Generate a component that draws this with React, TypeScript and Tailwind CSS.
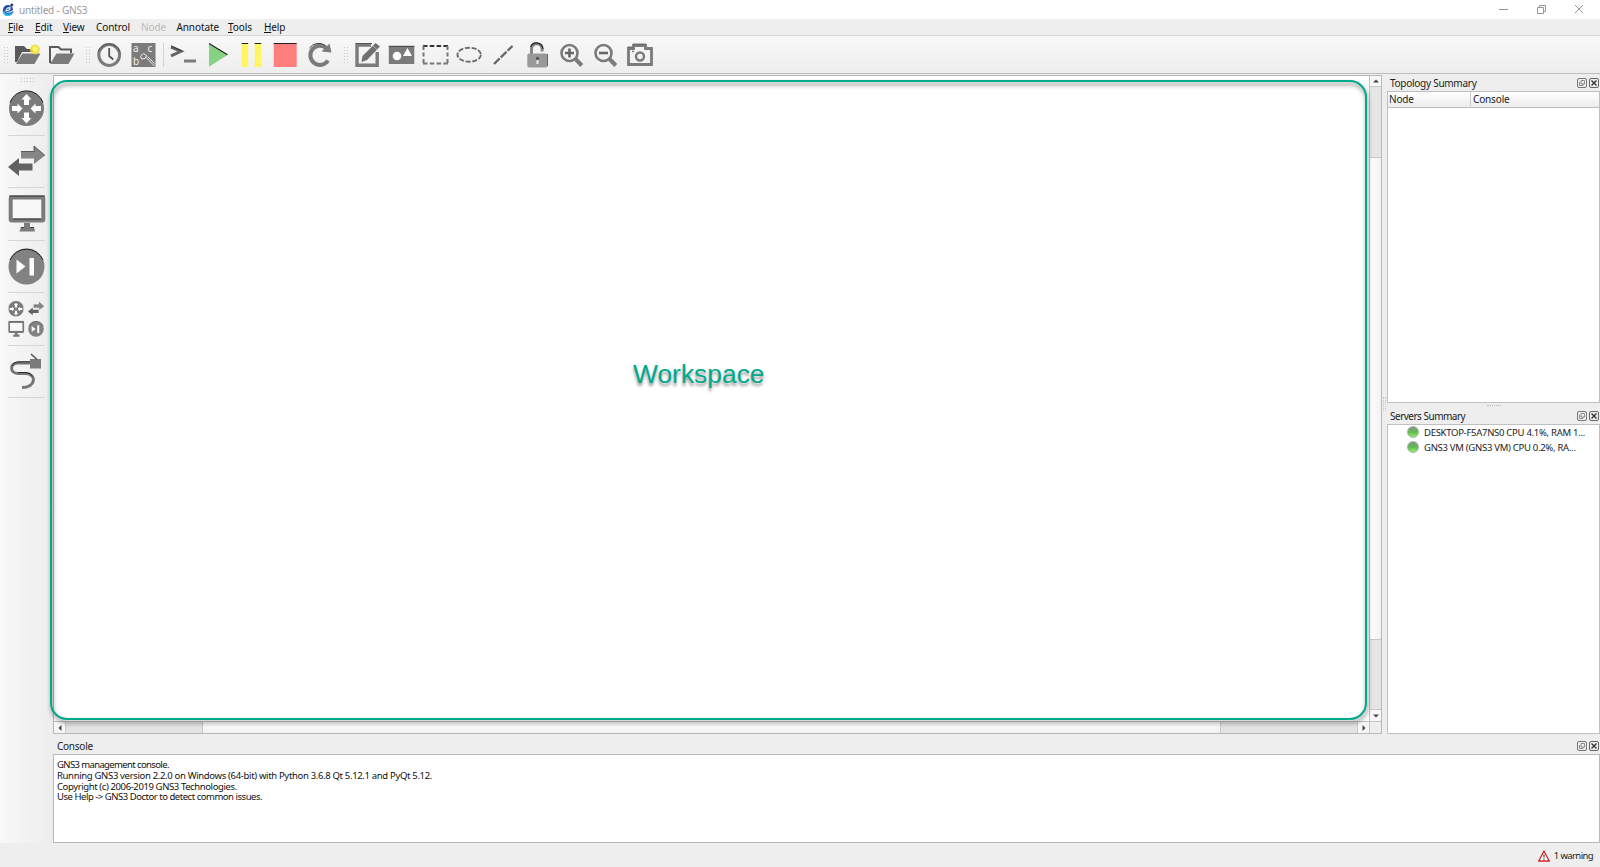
import React from "react";

const G = "#7b7b7b";
const D = "#5c5c5c";

function GripV() {
  return (
    <svg width="5" height="18" viewBox="0 0 5 18" className="shrink-0">
      {[0, 3, 6, 9, 12, 15].map((y) => (
        <g key={y} fill="#c9c9c9">
          <rect x="0" y={y + 1} width="1" height="1" />
          <rect x="3" y={y + 1} width="1" height="1" />
        </g>
      ))}
    </svg>
  );
}

function GripH() {
  return (
    <svg width="15" height="5" viewBox="0 0 15 5" className="block shrink-0">
      {[0, 3, 6, 9, 12].map((x) => (
        <g key={x} fill="#bdbdbd">
          <rect x={x + 1} y="0" width="1" height="1" />
          <rect x={x + 1} y="3" width="1" height="1" />
        </g>
      ))}
    </svg>
  );
}

function Tool({ children }: { children: React.ReactNode }) {
  return (
    <svg width="34" height="37" viewBox="0 0 34 37" className="block shrink-0" fill="none">
      {children}
    </svg>
  );
}

function FolderNew() {
  return (
    <Tool>
      <path d="M5 10h9l3 3h10v3H12l-5 10H5z" fill="#5a5a5a" />
      <path d="M12.5 17.5H30.5L24.5 28H6z" fill={G} />
      <circle cx="25" cy="13.5" r="5" fill="#efe23c" opacity=".85" />
      <circle cx="25" cy="13.5" r="2.5" fill="#fff76a" />
    </Tool>
  );
}
function FolderOpen() {
  return (
    <Tool>
      <path d="M6 27V11h8.500l2.500 2.500h10V17" stroke={D} strokeWidth="2" />
      <path d="M12.500 17.500H30.500L24.500 28H6z" fill={G} />
    </Tool>
  );
}
function Clock() {
  return (
    <Tool>
      <circle cx="17.200" cy="19" r="10.400" stroke={G} strokeWidth="3" />
      <path d="M6 16a11.500 11.500 0 0 1 22 0" stroke="#444" strokeWidth=".8" />
      <path d="M17.200 12v8l4 3.500" stroke="#555" strokeWidth="1.800" />
    </Tool>
  );
}
function Labels() {
  return (
    <Tool>
      <rect x="5.500" y="7" width="24" height="24" fill={G} />
      <g fill="#f2f2f2" fontFamily="Noto Sans, sans-serif" fontSize="10">
        <text x="7" y="15.500">a</text>
        <text x="21.500" y="15.500">c</text>
        <text x="7" y="29">b</text>
      </g>
      <path d="M14.500 20l3-2.500 3 2-1.500 3-3.500.5zM19.500 21l9 9M21.500 20.500l7 7" stroke="#eee" strokeWidth="1" />
    </Tool>
  );
}
function Prompt() {
  return (
    <Tool>
      <path d="M5 11l10 4.300L5 19.800" stroke="#666" strokeWidth="3" />
      <path d="M5 10l10.500 4.800" stroke="#333" strokeWidth="1" />
      <path d="M18 25h12" stroke={G} strokeWidth="3" />
    </Tool>
  );
}
function Play() {
  return (
    <Tool>
      <path d="M9 7.500L27.500 19L9 30.800z" fill="#86d283" />
      <path d="M9 7.500L27.500 18.700" stroke="#222" strokeWidth="1.200" />
    </Tool>
  );
}
function Pause() {
  return (
    <Tool>
      <path d="M7.700 7h6.500v24H7.700zM20.700 7H27.200v24h-6.500z" fill="#fff660" />
      <path d="M7.700 7.500H14.200M20.700 7.500H27.200" stroke="#222" />
    </Tool>
  );
}
function Stop() {
  return (
    <Tool>
      <path d="M5.700 7h23v24h-23z" fill="#ff7f7f" />
      <path d="M5.700 7.500h23" stroke="#222" />
    </Tool>
  );
}
function Reload() {
  return (
    <Tool>
      <path d="M26 24.500A9.600 9.600 0 1 1 24.200 12" stroke={G} strokeWidth="4" />
      <path d="M27.500 7.500l2 9-10-1z" fill={G} />
      <path d="M7.500 12a11.500 11.500 0 0 1 16-2.500" stroke="#444" />
    </Tool>
  );
}
function Edit() {
  return (
    <Tool>
      <path d="M27.200 16v13.200H7V9h14" stroke={G} strokeWidth="3.400" />
      <path d="M5.500 7.500H22" stroke="#555" />
      <path d="M25.500 7l4.500 3.500L17 24l-5.500 2 1-6z" fill="#707070" />
      <path d="M22.500 9.500l4.500 4" stroke="#ccc" strokeWidth=".7" />
    </Tool>
  );
}
function Picture() {
  return (
    <Tool>
      <rect x="4.800" y="10" width="25.500" height="18" fill={G} />
      <path d="M4.800 10.300h25.500" stroke="#444" />
      <circle cx="13" cy="20" r="4.300" fill="#fff" />
      <path d="M19 20l4.500-8 4.500 8z" fill="#fff" />
    </Tool>
  );
}
function DashedRect() {
  return (
    <Tool>
      <path d="M5 10h25" stroke="#333" strokeWidth="2" strokeDasharray="4.500 2.300" />
      <path d="M5 27.500h25" stroke="#777" strokeWidth="2" strokeDasharray="4.500 2.300" />
      <path d="M5.500 10v18M29.500 10v18" stroke="#777" strokeWidth="2" strokeDasharray="4 2.500" />
    </Tool>
  );
}
function DashedEllipse() {
  return (
    <Tool>
      <ellipse cx="17.200" cy="18.700" rx="11.700" ry="7" stroke="#6a6a6a" strokeWidth="1.900" strokeDasharray="5 1.700" />
    </Tool>
  );
}
function DashedLine() {
  return (
    <Tool>
      <path d="M8 28L26.500 10" stroke="#666" strokeWidth="2.300" strokeDasharray="8 1.500" />
    </Tool>
  );
}
function Unlock() {
  return (
    <Tool>
      <path d="M11.500 20v-7a5.300 5.300 0 0 1 10.600 0v2.500" stroke="#858585" strokeWidth="3" />
      <path d="M10.500 11a6.500 6.500 0 0 1 12.500 2" stroke="#222" strokeWidth="1.200" />
      <rect x="7.300" y="17.500" width="20.400" height="14" rx="2" fill="#999" />
      <path d="M27.500 18v12" stroke="#666" />
      <path d="M17.500 22v6" stroke="#eee" strokeWidth="2" />
      <circle cx="17.500" cy="22.500" r="1.700" fill="#555" />
    </Tool>
  );
}
function Zoom({ plus }: { plus?: boolean }) {
  return (
    <Tool>
      <circle cx="15.500" cy="17" r="8" stroke={G} strokeWidth="2.600" />
      <path d="M21.500 23l6.300 6.500" stroke={G} strokeWidth="4" />
      <path d={plus ? "M11 17h9M15.500 12.500v9" : "M11 17h9"} stroke="#666" strokeWidth="2.600" />
    </Tool>
  );
}
function Camera() {
  return (
    <Tool>
      <path d="M6.500 12.500h5V9.500h12v3H29.500v16H6.500z" stroke={G} strokeWidth="2.800" />
      <circle cx="18" cy="20.500" r="4" stroke={G} strokeWidth="2.400" />
      <path d="M10 15.500h2" stroke={G} strokeWidth="1.500" />
      <path d="M5.500 11h5M11 8h13" stroke="#555" strokeWidth=".8" />
    </Tool>
  );
}

function RouterShape() {
  return (
    <g>
      <circle cx="18.500" cy="18.500" r="17.500" fill={G} />
      <path d="M2 12.500a17.500 17.500 0 0 1 33 0" stroke="#222" fill="none" />
      <g fill="#fff">
        <path d="M18.500 4l5 5.500H21V15h-5V9.500h-2.500z" />
        <path d="M18.500 33.500l5-5.500H21v-5.500h-5V28h-2.500z" />
        <path d="M14.500 18.500l-5-5V16H4v5h5.500v2.500z" />
        <path d="M22.500 18.500l5-5V16H33v5h-5.500v2.500z" />
      </g>
    </g>
  );
}
function SwitchShape() {
  return (
    <g>
      <path d="M13 8.500h13V3l11 9.500L26 21v-5.500H13z" fill="#858585" />
      <path d="M13 8.500h13V3l11 9.500" stroke="#444" strokeWidth=".8" fill="none" />
      <path d="M24.500 20.500H11V15L0 24l11 9v-5.500h13.500z" fill="#626262" />
    </g>
  );
}
function MonitorShape() {
  return (
    <g>
      <rect x="2.700" y="2.500" width="32.600" height="23" rx="1" fill="#f8f8f8" stroke={G} strokeWidth="4" />
      <path d="M1 1h36M5 24h28" stroke="#333" strokeWidth="1" />
      <path d="M16 28h6v4h4l1 4.500H11.500L13 32h3z" fill={G} />
      <path d="M13 32.500h3M22 32.500h4" stroke="#333" strokeWidth=".8" />
    </g>
  );
}
function EndShape() {
  return (
    <g>
      <circle cx="18.500" cy="18.500" r="18" fill="#828282" />
      <path d="M2 12a18 18 0 0 1 33 0" stroke="#222" fill="none" />
      <path d="M8.500 11.500l9 7-9 7zM21.500 10H26v17.500h-4.500z" fill="#fff" />
    </g>
  );
}
function CableShape() {
  return (
    <g fill="none">
      <path d="M22 10H10C2 10 1 20 10 20.500h8c11 .5 10 14-4 14" stroke="#757575" strokeWidth="3" />
      <path d="M22 8.800H10Q5 9 3.500 13M10 19.500h8q5 .5 6.500 4" stroke="#222" strokeWidth=".9" />
      <path d="M22 6h11v9.500H22z" fill={G} />
      <path d="M23 1l6 5.500" stroke="#555" strokeWidth="1.600" />
    </g>
  );
}

function Slot({ children }: { children: React.ReactNode }) {
  return (
    <div className="ml-2 flex h-[52.5px] w-[37px] shrink-0 flex-col items-center justify-center border-b border-[#d6d6d6]">
      {children}
    </div>
  );
}
function Big({ children }: { children: React.ReactNode }) {
  return (
    <svg width="37" height="37" viewBox="0 0 37 37" className="overflow-visible" fill="none">
      {children}
    </svg>
  );
}
function Small({ children }: { children: React.ReactNode }) {
  return (
    <svg width="16" height="16" viewBox="0 0 37 37" className="overflow-visible" fill="none">
      {children}
    </svg>
  );
}

function DockButtons() {
  return (
    <svg width="22" height="10" viewBox="0 0 22 10" fill="none" className="shrink-0">
      <rect x=".5" y=".5" width="9" height="9" rx="1.500" stroke="#777" />
      <path d="M4 2.500h3.500V6H4zM2.500 4v3.500H6V6" stroke="#777" strokeWidth=".8" />
      <rect x="12.500" y=".5" width="9" height="9" rx="1.500" stroke="#666" />
      <path d="M14.500 2.500l5 5M19.500 2.500l-5 5" stroke="#333" strokeWidth="1.400" />
    </svg>
  );
}

function Tri({ d }: { d: string }) {
  return (
    <svg width="8" height="8" viewBox="0 0 8 8">
      <path d={d} fill="#444" />
    </svg>
  );
}

function Server({ text }: { text: string }) {
  return (
    <div className="flex h-[15px] items-center pl-[19px]">
      <div className="mr-1 h-3 w-3 shrink-0 rounded-full border border-[#a9b3a9] bg-linear-to-b from-[#7d987d] via-[#5fb950] to-[#8cf06a]" />
      <div className="whitespace-nowrap pl-[1px] pt-[2px] text-[9.5px] tracking-[-0.28px]">{text}</div>
    </div>
  );
}

function MenuItem({ text, w, disabled, plain }: { text: string; w: string; disabled?: boolean; plain?: boolean }) {
  return (
    <div className={`${w} shrink-0 whitespace-nowrap tracking-[-0.1px] ${disabled ? "text-[#bcbcbc]" : "text-[#111]"}`}>
      {disabled || plain ? (
        text
      ) : (
        <>
          <span className="underline decoration-1 underline-offset-1">{text[0]}</span>
          {text.slice(1)}
        </>
      )}
    </div>
  );
}

export default function App() {
  return (
    <div className="relative flex h-[867px] w-[1600px] flex-col overflow-hidden bg-[#eeeeee] font-['Noto_Sans','Open_Sans',sans-serif] text-[10px] leading-none text-[#222]">
      <header className="flex h-[19px] shrink-0 items-center bg-white">
        <svg width="12" height="14" viewBox="0 0 12 14" className="ml-[2px]" fill="none">
          <path d="M1 6C0 11 3 13.500 6.500 13c3-.5 5-2.500 5-5.500L9 9.500 5 9.500 3.500 5z" fill="#2a7fc4" />
          <path d="M1 7C1 3.500 4 1.500 7 2l3.500 2.500L11 7 8.500 8.500 5 9z" fill="#2a4fa8" />
          <path d="M4 8.500c0-3 2-4 4-3.800.5 2-2 3-4 2.800" stroke="#e6f6ff" strokeWidth="1.200" />
          <path d="M1.500 9c1 3.500 5 4.500 8 2" stroke="#36c4ec" strokeWidth="1.400" />
          <circle cx="9.800" cy="2" r="1.500" fill="#26337d" />
        </svg>
        <div className="ml-[5px] w-[1480px] tracking-[-0.18px] text-[#999]">untitled - GNS3</div>
        <svg width="86" height="12" viewBox="0 0 86 12" fill="none" stroke="#969696" strokeWidth="1" className="mb-[2px]">
          <path d="M0 6.500h9" />
          <path d="M38.500 4.500h6v6h-6zM40.500 4.500v-2h6v6h-2" />
          <path d="M76 2l8 8M84 2l-8 8" />
        </svg>
      </header>

      <nav className="flex h-[17px] shrink-0 items-center border-b border-[#d4d4d4] pl-2">
        <MenuItem text="File" w="w-[27px]" />
        <MenuItem text="Edit" w="w-[28px]" />
        <MenuItem text="View" w="w-[33px]" />
        <MenuItem text="Control" w="w-[45px]" plain />
        <MenuItem text="Node" w="w-[35.500px]" disabled />
        <MenuItem text="Annotate" w="w-[51.500px]" plain />
        <MenuItem text="Tools" w="w-[36px]" />
        <MenuItem text="Help" w="w-[30px]" />
      </nav>

      <div className="flex h-[38px] shrink-0 items-center border-b border-[#bdbdbd] bg-linear-to-b from-[#f8f8f8] to-[#eeeeee] pl-1">
        <GripV />
        <div className="ml-[1px] flex w-[76px]">
          <FolderNew />
          <FolderOpen />
        </div>
        <GripV />
        <div className="ml-[1px] flex w-[71px]">
          <Clock />
          <Labels />
        </div>
        <div className="mr-[2px] h-[24px] w-px bg-[#d2d2d2]" />
        <div className="flex w-[178px]">
          <Prompt />
          <Play />
          <Pause />
          <Stop />
          <Reload />
        </div>
        <GripV />
        <div className="ml-[1px] flex">
          <Edit />
          <Picture />
          <DashedRect />
          <DashedEllipse />
          <DashedLine />
          <Unlock />
          <Zoom plus />
          <Zoom />
          <Camera />
        </div>
      </div>

      <div className="flex h-[769px] shrink-0">
        <aside className="flex w-[53px] shrink-0 flex-col bg-linear-to-r from-[#f8f8f8] to-[#ededed] pt-[4px]">
          <div className="ml-5">
            <GripH />
          </div>
          <Slot>
            <Big><RouterShape /></Big>
          </Slot>
          <Slot>
            <Big><SwitchShape /></Big>
          </Slot>
          <Slot>
            <Big><MonitorShape /></Big>
          </Slot>
          <Slot>
            <Big><EndShape /></Big>
          </Slot>
          <Slot>
            <div className="mr-[1px] grid grid-cols-2 gap-x-[4px] gap-y-[4px]">
              <Small><RouterShape /></Small>
              <Small><SwitchShape /></Small>
              <Small><MonitorShape /></Small>
              <Small><EndShape /></Small>
            </div>
          </Slot>
          <Slot>
            <Big><CableShape /></Big>
          </Slot>
        </aside>

        <div className="flex min-w-0 flex-1 flex-col">
          <div className="flex h-[660px] shrink-0">
            <main className="mt-[1px] flex w-[1329px] shrink-0 flex-col border border-[#b8b8b8] bg-white">
              <div className="flex min-h-0 flex-1">
                <div className="flex flex-1 items-center pb-[48px] pl-[579px]">
                  <span className="text-[26.4px] leading-none text-[#00a98b] font-['Liberation_Sans',Arial,sans-serif] [text-shadow:0px_3px_3px_#0006]">
                    Workspace
                  </span>
                </div>
                <div className="flex w-[12px] shrink-0 flex-col border-l border-[#c2c2c2] bg-[#e5e5e5]">
                  <div className="flex h-[11px] items-center justify-center border-b border-[#c8c8c8] bg-[#f8f8f8]">
                    <Tri d="M1 5.500h6L4 2.500z" />
                  </div>
                  <div className="h-[70px]" />
                  <div className="h-[483px] border-y border-[#c8c8c8] bg-linear-to-r from-white to-[#f1f1f1]" />
                  <div className="flex-1" />
                  <div className="flex h-[12px] items-center justify-center border-t border-[#c8c8c8] bg-[#f8f8f8]">
                    <Tri d="M1 2.500h6L4 5.500z" />
                  </div>
                </div>
              </div>
              <div className="flex h-[12px] shrink-0 border-t border-[#c2c2c2] bg-[#e3e3e3]">
                <div className="flex w-[12px] items-center justify-center border-r border-[#c8c8c8] bg-[#f8f8f8]">
                  <Tri d="M5.500 1v6L2.500 4z" />
                </div>
                <div className="w-[136px]" />
                <div className="w-[1019px] border-x border-[#c8c8c8] bg-linear-to-b from-white to-[#f1f1f1]" />
                <div className="flex-1" />
                <div className="flex w-[12px] items-center justify-center border-l border-[#c8c8c8] bg-[#f8f8f8]">
                  <Tri d="M2.500 1v6L5.500 4z" />
                </div>
                <div className="w-[12px] border-l border-[#c2c2c2] bg-[#eeeeee]" />
              </div>
            </main>

            <div className="flex w-[5px] shrink-0 items-center justify-center">
              <div className="h-[14px] w-[3px] border-x border-dotted border-[#c5c5c5]" />
            </div>

            <section className="flex flex-1 flex-col">
              <div className="flex h-[17px] shrink-0 items-center justify-between pl-[3px] pr-[1px]">
                <span className="tracking-[-0.27px]">Topology Summary</span>
                <DockButtons />
              </div>
              <div className="flex h-[312px] shrink-0 flex-col border border-[#c0c0c0] bg-white">
                <div className="flex h-[16px] shrink-0 items-center border-b border-[#bcbcbc] bg-linear-to-b from-white to-[#ececec] pb-[1px] tracking-[-0.15px]">
                  <div className="flex h-full w-[83px] items-center border-r border-[#cbcbcb] pl-[1px]">Node</div>
                  <div className="pl-[2px]">Console</div>
                </div>
              </div>
              <div className="flex h-[4px] items-center justify-center">
                <div className="h-px w-[14px] border-t border-dotted border-[#b5b5b5]" />
              </div>
              <div className="flex h-[17px] shrink-0 items-center justify-between pl-[3px] pr-[1px]">
                <span className="tracking-[-0.5px]">Servers Summary</span>
                <DockButtons />
              </div>
              <div className="flex min-h-0 flex-1 flex-col border border-[#c0c0c0] bg-white">
                <div className="-mt-[1px] flex flex-col">
                  <Server text="DESKTOP-F5A7NS0 CPU 4.1%, RAM 1..." />
                  <Server text="GNS3 VM (GNS3 VM) CPU 0.2%, RA..." />
                </div>
              </div>
            </section>
          </div>

          <div className="flex h-[20px] shrink-0 items-center justify-between pl-[4px] pr-[1px] pt-[4px]">
            <span className="tracking-[-0.25px]">Console</span>
            <DockButtons />
          </div>
          <div className="flex flex-1 flex-col border border-[#b8b8b8] bg-white pl-[3px] pt-[5px] text-[9.5px] leading-[10.8px] text-[#111]">
            <div className="tracking-[-0.62px]">GNS3 management console.</div>
            <div className="tracking-[-0.33px]">Running GNS3 version 2.2.0 on Windows (64-bit) with Python 3.6.8 Qt 5.12.1 and PyQt 5.12.</div>
            <div className="tracking-[-0.39px]">Copyright (c) 2006-2019 GNS3 Technologies.</div>
            <div className="tracking-[-0.47px]">Use Help -&gt; GNS3 Doctor to detect common issues.</div>
          </div>
        </div>
      </div>

      <footer className="flex flex-1 items-center justify-end pr-[7px] pt-[2px] text-[9.5px] tracking-[-0.6px]">
        <svg width="12" height="12" viewBox="0 0 12 12" className="mr-[4px]" fill="none">
          <path d="M6 1.200L11.200 11H.8z" fill="#fff" stroke="#cc2a2a" strokeWidth="1.300" />
          <path d="M6 4.500v3M6 8.300v1.500" stroke="#444" strokeWidth="1.200" />
        </svg>
        <span>1 warning</span>
      </footer>

      <div className="pointer-events-none absolute left-[50px] top-[80px] h-[640px] w-[1317px] rounded-[17px] border-[2px] border-[#00a98b] drop-shadow-[1px_3px_2px_#0008]" />
    </div>
  );
}
